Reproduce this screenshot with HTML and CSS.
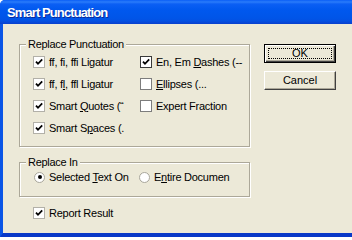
FILE: index.html
```html
<!DOCTYPE html>
<html>
<head>
<meta charset="utf-8">
<link rel="stylesheet" href="styles.css">
</head>
<body>
<div class="window">
  <div class="titlebar"><span class="title">Smart Punctuation</span></div>
  <div class="frame">
    <div class="client">
      <div class="left">
        <div class="group g1">
          <span class="legend">Replace Punctuation</span>
          <div class="grid">
            <div class="opt c1"><span class="cb light on"><svg viewBox="0 0 10 10"><path d="M2 4.6 L4 6.8 L8.2 2.4"/></svg></span><span class="lbl">ff, fi, ffi Ligatur</span></div>
            <div class="opt c2"><span class="cb dark on"><svg viewBox="0 0 10 10"><path d="M2 4.6 L4 6.8 L8.2 2.4"/></svg></span><span class="lbl">En, Em <u>D</u>ashes (--</span></div>
            <div class="opt c1"><span class="cb light on"><svg viewBox="0 0 10 10"><path d="M2 4.6 L4 6.8 L8.2 2.4"/></svg></span><span class="lbl">ff, f<u>l</u>, ffl Ligatur</span></div>
            <div class="opt c2"><span class="cb mid"></span><span class="lbl"><u>E</u>llipses (...</span></div>
            <div class="opt c1"><span class="cb light on"><svg viewBox="0 0 10 10"><path d="M2 4.6 L4 6.8 L8.2 2.4"/></svg></span><span class="lbl">Smart <u>Q</u>uotes (“</span></div>
            <div class="opt c2"><span class="cb mid"></span><span class="lbl">Expert Fraction</span></div>
            <div class="opt c1"><span class="cb light on"><svg viewBox="0 0 10 10"><path d="M2 4.6 L4 6.8 L8.2 2.4"/></svg></span><span class="lbl">Smart S<u>p</u>aces (.</span></div>
          </div>
        </div>
        <div class="group g2">
          <span class="legend">Replace In</span>
          <div class="radios">
            <div class="opt c1"><span class="rb on"></span><span class="lbl">Selected <u>T</u>ext On</span></div>
            <div class="opt c2"><span class="rb"></span><span class="lbl">E<u>n</u>tire Documen</span></div>
          </div>
        </div>
        <div class="opt report"><span class="cb light on"><svg viewBox="0 0 10 10"><path d="M2 4.6 L4 6.8 L8.2 2.4"/></svg></span><span class="lbl">Report Result</span></div>
      </div>
      <div class="buttons">
        <div class="btn default"><span class="focus">OK</span></div>
        <div class="btn">Cancel</div>
      </div>
    </div>
  </div>
</div>
</body>
</html>
```
FILE: styles.css
```css
html, body {
  margin: 0;
  padding: 0;
  background: #ffffff;
}
body {
  width: 352px;
  height: 237px;
  overflow: hidden;
  font-family: "Liberation Sans", Arial, sans-serif;
  font-size: 11px;
  color: #000;
}
.window {
  width: 352px;
  height: 237px;
  display: flex;
  flex-direction: column;
  border-top-left-radius: 5px;
  overflow: hidden;
  background: #0a54e4;
}
.titlebar {
  height: 24px;
  flex: none;
  background: linear-gradient(to bottom, #0a5ef6 0px, #2a7cfa 2px, #0b5ff4 4px, #0058ee 10px, #0055e8 18px, #0350e2 21px, #0845d4 23px, #0840cc 24px);
  display: flex;
  align-items: flex-start;
}
.title {
  margin: 5px 0 0 7px;
  font-family: "Liberation Sans", Arial, sans-serif;
  font-weight: bold;
  font-size: 13px;
  letter-spacing: -0.9px;
  line-height: 16px;
  color: #fff;
  text-shadow: 1px 1px 0 #0a2a9a;
}
.frame {
  flex: 1;
  display: flex;
  border-left: 3px solid #0a55e6;
  border-bottom: 4px solid #0838c8;
  box-shadow: inset 0 -1px 0 #0a4ad8;
}
.client {
  flex: 1;
  background: #ece9d8;
  display: flex;
  align-items: flex-start;
  padding: 20px 0 0 16px;
}
.left {
  width: 232px;
  display: flex;
  flex-direction: column;
}
.group {
  box-sizing: border-box;
  width: 231px;
  border: 1px solid #aca899;
  box-shadow: inset 1px 1px 0 #fff, 1px 1px 0 #fff;
  display: flex;
  flex-direction: column;
  align-items: flex-start;
}
.g1 { height: 103px; }
.g2 { height: 35px; margin-top: 15px; }
.legend {
  display: block;
  height: 13px;
  line-height: 13px;
  margin: -7px 0 0 6px;
  padding: 0 2px;
  background: #ece9d8;
  letter-spacing: -0.3px;
}
.grid {
  display: grid;
  grid-template-columns: 107px 100px;
  grid-auto-rows: 12px;
  row-gap: 10px;
  margin: 5px 0 0 13px;
}
.radios {
  display: flex;
  margin: 2px 0 0 14px;
}
.radios .c1 { width: 105px; }
.opt {
  display: flex;
  align-items: center;
  height: 12px;
  white-space: nowrap;
}
.lbl {
  margin-left: 4px;
  line-height: 13px;
  letter-spacing: -0.25px;
}
.cb {
  box-sizing: border-box;
  width: 12px;
  height: 12px;
  flex: none;
  border: 1px solid #8e8e8e;
  background: #fff;
  display: flex;
  align-items: center;
  justify-content: center;
}
.cb.light { border-color: #b2b0a8; }
.cb.mid { border-color: #7d7d7d; }
.cb.dark { border-color: #3a3a3a; }
.cb svg {
  width: 10px;
  height: 10px;
  fill: none;
  stroke: #000;
  stroke-width: 1.8;
}
.rb {
  box-sizing: border-box;
  width: 11px;
  height: 11px;
  flex: none;
  border-radius: 50%;
  border: 1px solid #a9a79c;
  background: #fff;
  display: flex;
  align-items: center;
  justify-content: center;
}
.rb.on::after {
  content: "";
  width: 4px;
  height: 4px;
  border-radius: 50%;
  background: #000;
}
.radios .lbl { margin-left: 4px; }
.report {
  margin: 10px 0 0 14px;
}
.buttons {
  margin-left: 13px;
  display: flex;
  flex-direction: column;
  gap: 8px;
}
.btn {
  box-sizing: border-box;
  width: 72px;
  height: 19px;
  background: #ece9d8;
  border: 1px solid;
  border-color: #fff #404040 #404040 #fff;
  box-shadow: inset -1px -1px 0 #aca899;
  display: flex;
  align-items: center;
  justify-content: center;
  line-height: 13px;
}
.btn.default {
  border: 1px solid #000;
  box-shadow: inset 1px 1px 0 #fff, inset -1px -1px 0 #404040, inset -2px -2px 0 #aca899;
  padding: 3px;
}
.focus {
  flex: 1;
  align-self: stretch;
  border: 1px dotted #000;
  display: flex;
  align-items: center;
  justify-content: center;
}
```
